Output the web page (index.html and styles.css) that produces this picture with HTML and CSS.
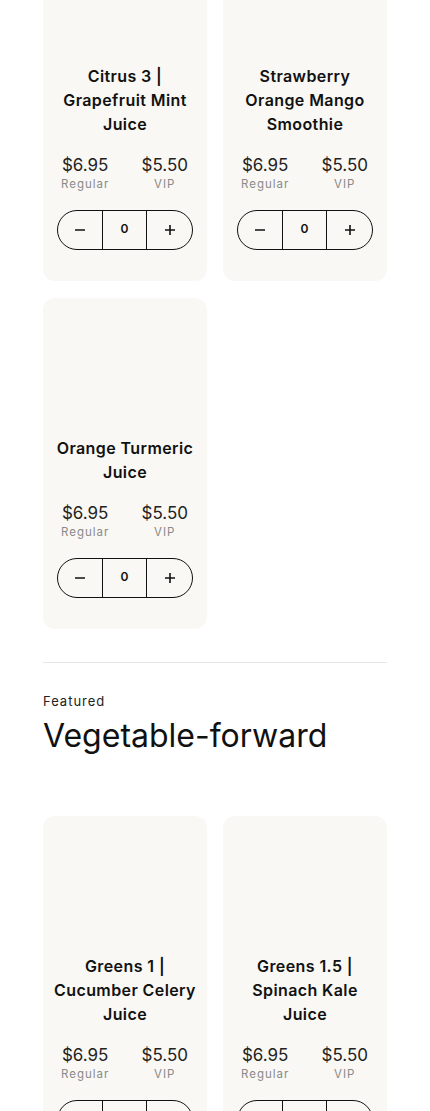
FILE: index.html
```
<!DOCTYPE html>
<html lang="en">
<head>
    <meta charset="UTF-8">
    <meta name="viewport" content="width=device-width, initial-scale=1.0">
    <title>Menu</title>
    <link rel="stylesheet" href="styles.css">
</head>
<body>
    <div class="page">
        <div class="products first">
            <div class="card">
                <div class="card-img"></div>
                <h3 class="card-title">Citrus 3 | Grapefruit Mint Juice</h3>
                <div class="prices">
                    <div class="price"><span class="amount">$6.95</span><span class="tier">Regular</span></div>
                    <div class="price"><span class="amount">$5.50</span><span class="tier">VIP</span></div>
                </div>
                <div class="qty">
                    <button class="qty-btn" aria-label="Remove"><svg width="12" height="12" viewBox="0 0 12 12"><path d="M1 6h10" stroke="#111" stroke-width="1.6"/></svg></button>
                    <span class="qty-val">0</span>
                    <button class="qty-btn" aria-label="Add"><svg width="12" height="12" viewBox="0 0 12 12"><path d="M1 6h10M6 1v10" stroke="#111" stroke-width="1.6"/></svg></button>
                </div>
            </div>
            <div class="card">
                <div class="card-img"></div>
                <h3 class="card-title">Strawberry Orange Mango Smoothie</h3>
                <div class="prices">
                    <div class="price"><span class="amount">$6.95</span><span class="tier">Regular</span></div>
                    <div class="price"><span class="amount">$5.50</span><span class="tier">VIP</span></div>
                </div>
                <div class="qty">
                    <button class="qty-btn" aria-label="Remove"><svg width="12" height="12" viewBox="0 0 12 12"><path d="M1 6h10" stroke="#111" stroke-width="1.6"/></svg></button>
                    <span class="qty-val">0</span>
                    <button class="qty-btn" aria-label="Add"><svg width="12" height="12" viewBox="0 0 12 12"><path d="M1 6h10M6 1v10" stroke="#111" stroke-width="1.6"/></svg></button>
                </div>
            </div>
            <div class="card">
                <div class="card-img"></div>
                <h3 class="card-title">Orange Turmeric Juice</h3>
                <div class="prices">
                    <div class="price"><span class="amount">$6.95</span><span class="tier">Regular</span></div>
                    <div class="price"><span class="amount">$5.50</span><span class="tier">VIP</span></div>
                </div>
                <div class="qty">
                    <button class="qty-btn" aria-label="Remove"><svg width="12" height="12" viewBox="0 0 12 12"><path d="M1 6h10" stroke="#111" stroke-width="1.6"/></svg></button>
                    <span class="qty-val">0</span>
                    <button class="qty-btn" aria-label="Add"><svg width="12" height="12" viewBox="0 0 12 12"><path d="M1 6h10M6 1v10" stroke="#111" stroke-width="1.6"/></svg></button>
                </div>
            </div>
        </div>

        <hr class="divider">

        <div class="section-head">
            <p class="eyebrow">Featured</p>
            <h2 class="section-title">Vegetable-forward</h2>
        </div>

        <div class="products">
            <div class="card">
                <div class="card-img"></div>
                <h3 class="card-title">Greens 1 | Cucumber Celery Juice</h3>
                <div class="prices">
                    <div class="price"><span class="amount">$6.95</span><span class="tier">Regular</span></div>
                    <div class="price"><span class="amount">$5.50</span><span class="tier">VIP</span></div>
                </div>
                <div class="qty">
                    <button class="qty-btn" aria-label="Remove"><svg width="12" height="12" viewBox="0 0 12 12"><path d="M1 6h10" stroke="#111" stroke-width="1.6"/></svg></button>
                    <span class="qty-val">0</span>
                    <button class="qty-btn" aria-label="Add"><svg width="12" height="12" viewBox="0 0 12 12"><path d="M1 6h10M6 1v10" stroke="#111" stroke-width="1.6"/></svg></button>
                </div>
            </div>
            <div class="card">
                <div class="card-img"></div>
                <h3 class="card-title">Greens 1.5 | Spinach Kale Juice</h3>
                <div class="prices">
                    <div class="price"><span class="amount">$6.95</span><span class="tier">Regular</span></div>
                    <div class="price"><span class="amount">$5.50</span><span class="tier">VIP</span></div>
                </div>
                <div class="qty">
                    <button class="qty-btn" aria-label="Remove"><svg width="12" height="12" viewBox="0 0 12 12"><path d="M1 6h10" stroke="#111" stroke-width="1.6"/></svg></button>
                    <span class="qty-val">0</span>
                    <button class="qty-btn" aria-label="Add"><svg width="12" height="12" viewBox="0 0 12 12"><path d="M1 6h10M6 1v10" stroke="#111" stroke-width="1.6"/></svg></button>
                </div>
            </div>
        </div>
    </div>
</body>
</html>
```

FILE: styles.css
```
html, body { margin: 0; background: #fff; }

body {
    font-family: Inter, "Liberation Sans", sans-serif;
    color: #111;
}

.page {
    padding: 0 43px 40px;
}

.products {
    display: grid;
    grid-template-columns: 1fr 1fr;
    gap: 17px 16px;
}

.products.first {
    margin-top: -74px;
}

.card {
    background: #f9f8f4;
    border-radius: 12px;
    padding: 0 0 31px;
    display: flex;
    flex-direction: column;
    align-items: center;
}

.card-img {
    height: 138px;
    align-self: stretch;
}

.card-title {
    margin: 0;
    padding: 0 10px;
    font-size: 16px;
    font-weight: 600;
    line-height: 24px;
    text-align: center;
    letter-spacing: 0.4px;
}

.prices {
    display: flex;
    justify-content: space-between;
    align-self: stretch;
    padding: 0 19px 0 18px;
    margin-top: 18px;
}

.price {
    display: flex;
    flex-direction: column;
    align-items: center;
}

.amount {
    font-size: 17px;
    line-height: 22px;
    font-weight: 400;
    color: #222;
}

.tier {
    font-size: 11.5px;
    line-height: 16px;
    letter-spacing: 1px;
    color: #8a8a8a;
}

.qty {
    margin-top: 18px;
    width: 136px;
    height: 40px;
    box-sizing: border-box;
    border: 1px solid #111;
    border-radius: 20px;
    display: grid;
    grid-template-columns: 44px 1fr 45px;
    overflow: hidden;
}

.qty-btn {
    border: 0;
    background: transparent;
    padding: 0;
    display: flex;
    align-items: center;
    justify-content: center;
    cursor: pointer;
}

.qty-val {
    border-left: 1px solid #111;
    border-right: 1px solid #111;
    display: flex;
    align-items: center;
    justify-content: center;
    font-size: 12px;
    font-weight: 600;
    padding-bottom: 3px;
}

.divider {
    border: 0;
    border-top: 1px solid #e6e6e6;
    margin: 33px 0 0;
}

.section-head {
    padding: 30px 0 59px;
}

.eyebrow {
    margin: 0;
    font-size: 13px;
    line-height: 16px;
    letter-spacing: 1px;
    color: #222;
}

.section-title {
    margin: 6px 0 0;
    font-size: 32px;
    line-height: 42px;
    font-weight: 400;
    letter-spacing: 0;
}
```
